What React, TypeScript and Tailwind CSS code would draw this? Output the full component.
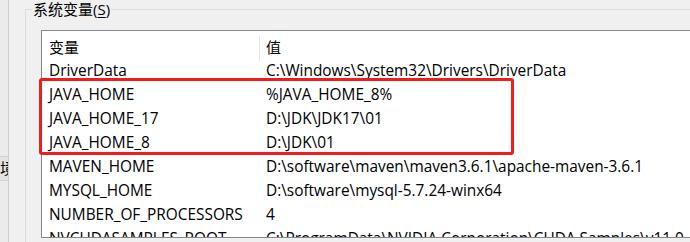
const rows = [
  ["DriverData", "C:\\Windows\\System32\\Drivers\\DriverData"],
  ["JAVA_HOME", "%JAVA_HOME_8%"],
  ["JAVA_HOME_17", "D:\\JDK\\JDK17\\01"],
  ["JAVA_HOME_8", "D:\\JDK\\01"],
  ["MAVEN_HOME", "D:\\software\\maven\\maven3.6.1\\apache-maven-3.6.1"],
  ["MYSQL_HOME", "D:\\software\\mysql-5.7.24-winx64"],
  ["NUMBER_OF_PROCESSORS", "4"],
  ["NVCUDASAMPLES_ROOT", "C:\\ProgramData\\NVIDIA Corporation\\CUDA Samples\\v11.0"],
];

export default function App() {
  return (
    <div
      className="relative w-[690px] h-[242px] overflow-hidden bg-[#f0f0f0] flex text-black text-[15.4px]"
      style={{ fontFamily: '"Open Sans", "Noto Sans CJK SC", sans-serif' }}
    >
      {/* window behind, left edge */}
      <div className="w-[9px] shrink-0 flex flex-col bg-[#ebebeb] border-r border-[#cdcdcd]">
        <div className="h-[157px] border-b border-[#d4d4d4]"></div>
        <div className="h-[24px] bg-[#e3e3e3] border-b border-[#d4d4d4] flex justify-end items-center overflow-hidden">
          <span className="whitespace-nowrap mr-[-7px] text-[15px]">境</span>
        </div>
        <div className="flex-1"></div>
      </div>

      {/* group box */}
      <div className="relative ml-[16px] mt-[9px] flex-1 border-l border-t border-[#dcdcdc] pl-[15px] pt-[20px]">
        <span className="absolute -top-[10px] left-[6px] bg-[#f0f0f0] px-px text-[15px] leading-[19px]">
          系统变量(<span className="underline underline-offset-2">S</span>)
        </span>

        <div className="h-[208px] bg-white border-l border-t border-b border-[#828790] overflow-hidden">
          <div className="flex h-[28px] items-center pt-[4px]">
            <div className="w-[217px] pl-[7px] text-[15px]">变量</div>
            <div className="w-px h-[25px] bg-[#e5e5e5] self-start mt-[1px]"></div>
            <div className="pl-[6px] text-[15px]">值</div>
          </div>
          {rows.map(([name, value]) => (
            <div key={name} className="flex h-[24px] items-center whitespace-nowrap leading-[20px]">
              <div className="w-[218px] shrink-0 pl-[7px]">{name}</div>
              <div className="pl-[6px]">{value}</div>
            </div>
          ))}
        </div>
      </div>

      {/* red highlight drawn over the list */}
      <div className="absolute left-[39px] top-[78px] w-[475px] h-[77px] border-[3px] border-[#f21c1c] rounded-[3px]"></div>
    </div>
  );
}
